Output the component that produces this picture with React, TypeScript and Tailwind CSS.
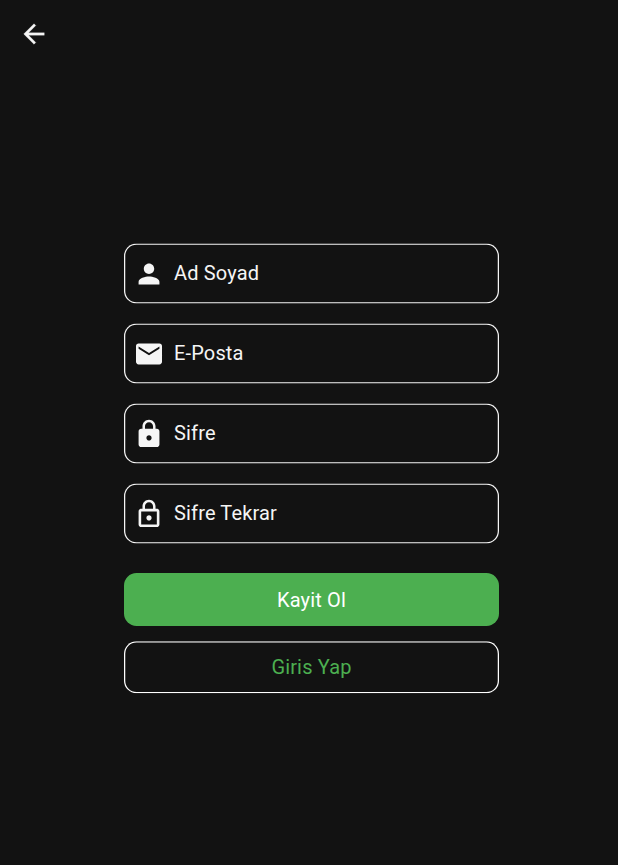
import React from "react";

type Field = { label: string; path: string };

const fields: Field[] = [
  {
    label: "Ad Soyad",
    path: "M12 12c2.21 0 4-1.79 4-4s-1.79-4-4-4-4 1.79-4 4 1.79 4 4 4zm0 2c-2.67 0-8 1.34-8 4v2h16v-2c0-2.66-5.33-4-8-4z",
  },
  {
    label: "E-Posta",
    path: "M20 4H4c-1.1 0-2 .9-2 2v12c0 1.1.9 2 2 2h16c1.1 0 2-.9 2-2V6c0-1.1-.9-2-2-2zm0 4l-8 5-8-5V6.3l8 5 8-5V8z",
  },
  {
    label: "Sifre",
    path: "M18 8h-1V6c0-2.76-2.24-5-5-5S7 3.24 7 6v2H6c-1.1 0-2 .9-2 2v10c0 1.1.9 2 2 2h12c1.1 0 2-.9 2-2V10c0-1.1-.9-2-2-2zm-6 9c-1.1 0-2-.9-2-2s.9-2 2-2 2 .9 2 2-.9 2-2 2zm3.1-9H8.9V6c0-1.71 1.39-3.1 3.1-3.1 1.71 0 3.1 1.39 3.1 3.1v2z",
  },
  {
    label: "Sifre Tekrar",
    path: "M18 8h-1V6c0-2.76-2.24-5-5-5S7 3.24 7 6v2H6c-1.1 0-2 .9-2 2v10c0 1.1.9 2 2 2h12c1.1 0 2-.9 2-2V10c0-1.1-.9-2-2-2zM8.9 6c0-1.71 1.39-3.1 3.1-3.1s3.1 1.39 3.1 3.1v2H8.9V6zM18 20H6V10h12v10zm-6-3c1.1 0 2-.9 2-2s-.9-2-2-2-2 .9-2 2 .9 2 2 2z",
  },
];

export default function App() {
  return (
    <div className="flex h-[865px] w-full flex-col overflow-hidden bg-[#121212] font-['Roboto',sans-serif] text-[#f5f5f5]">
      <header className="flex h-[68px] shrink-0 items-center pl-[18px]">
        <button aria-label="Geri">
          <svg viewBox="0 0 24 24" className="size-8 fill-[#f5f5f5]">
            <path
              transform="translate(.42 .42) scale(.965)"
              d="M20 11H7.83l5.59-5.59L12 4l-8 8 8 8 1.41-1.41L7.83 13H20v-2z"
              className="stroke-[#f5f5f5] stroke-[0.2]"
              strokeLinejoin="round"
            />
          </svg>
        </button>
      </header>
      <main className="ml-[124px] mt-[175px] flex w-[375px] flex-col">
        <div className="flex flex-col gap-5">
          {fields.map((f) => (
            <div
              key={f.label}
              className="flex h-[60px] translate-y-[0.5px] items-center rounded-[12.5px] pl-[9px] shadow-[inset_0_0_0_1.25px_#f5f5f5]"
            >
              <svg viewBox="0 0 24 24" className="size-8 fill-[#f5f5f5]">
                <path transform="translate(.28 .65) scale(.977)" d={f.path} />
              </svg>
              <span className="mb-0.5 ml-[9px] text-xl tracking-[0.15px]">{f.label}</span>
            </div>
          ))}
        </div>
        <button className="mt-[30px] h-[53px] rounded-[12.5px] bg-[#4caf50] text-xl tracking-[0.15px] text-white">
          Kayit Ol
        </button>
        <button className="mt-[15px] h-[52px] translate-y-[0.25px] rounded-[12.5px] text-xl tracking-[0.15px] text-[#4caf50] shadow-[inset_0_0_0_1.25px_#ffffff]">
          Giris Yap
        </button>
      </main>
    </div>
  );
}
